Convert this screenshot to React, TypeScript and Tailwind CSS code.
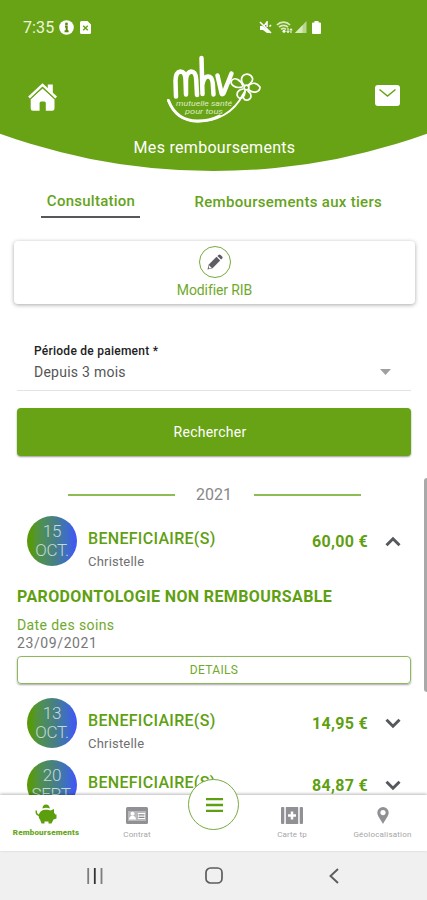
import React from 'react';
import { useState } from 'react';

type Refund = {
  id: number;
  day: string;
  month: string;
  amount: string;
  name: string;
  label?: string;
  careDate?: string;
};

const refunds: Refund[] = [
  {
    id: 1,
    day: '15',
    month: 'OCT.',
    amount: '60,00 €',
    name: 'Christelle',
    label: 'PARODONTOLOGIE NON REMBOURSABLE',
    careDate: '23/09/2021',
  },
  { id: 2, day: '13', month: 'OCT.', amount: '14,95 €', name: 'Christelle' },
  { id: 3, day: '20', month: 'SEPT.', amount: '84,87 €', name: 'Christelle' },
];

const StatusBar = () => {
  return (
    <div className="flex h-[18px] items-center pr-[106px] pl-[23px]">
      <span className="w-[36px] pt-px text-[16px] leading-[18px] tracking-[0.1px] text-[#eef6df]">
        7:35
      </span>
      <svg width="15" height="15" viewBox="0 0 15 15">
        <circle cx="7.5" cy="7.5" r="7.3" fill="#fff" />
        <circle cx="7.5" cy="3.9" r="1.4" fill="#57880f" />
        <path d="M6 6.4h1.7v4.8M5.6 11.2h4" stroke="#57880f" strokeWidth="2" fill="none" />
      </svg>
      <svg width="11" height="13" viewBox="0 0 11 13" className="ml-[6px]">
        <path d="M1.5 0h6L11 3.5v8a1.5 1.5 0 0 1-1.5 1.5h-8A1.5 1.5 0 0 1 0 11.5v-10A1.5 1.5 0 0 1 1.5 0z" fill="#fff" />
        <path d="M3.2 4.7l4.6 4.6M7.8 4.7l-4.6 4.6" stroke="#68a315" strokeWidth="1.5" />
      </svg>
      <div className="ml-auto flex items-center">
        <svg width="13" height="13" viewBox="0 0 13 13">
          <path d="M1 5h2.5L12 11.5V12L8 12 4 9H1z" fill="#fff" />
          <path d="M1 1l11 11M5.5 4.5l2.500-3.500v5M10.500 5.500L12 4" stroke="#fff" strokeWidth="1.6" />
        </svg>
        <svg width="17" height="13" viewBox="0 0 17 13" className="ml-[4px]">
          <path d="M1 4a9 9 0 0 1 13 0M3 6.2a6.5 6.5 0 0 1 9 0M5 8.4a4 4 0 0 1 5 0" stroke="#d9eabb" strokeWidth="1.8" fill="none" />
          <circle cx="8" cy="10.2" r="1.5" fill="#fff" />
          <path d="M12 7v4.5M10.6 10l1.4 1.7 1.3-1.7M15 12V8M13.7 9.2L15 7.7l1.3 1.5" stroke="#fff" strokeWidth="1" fill="none" />
        </svg>
        <svg width="12" height="12" viewBox="0 0 12 12" className="ml-[2px]">
          <path d="M0 12L11.5 0v12z" fill="#b9d690" />
          <path d="M0 12L7.5 4.2V12z" fill="#d9eabb" />
        </svg>
        <svg width="9" height="13" viewBox="0 0 9 13" className="ml-[5px]">
          <path d="M2.5 0h4v1.5H8A1 1 0 0 1 9 2.5V12a1 1 0 0 1-1 1H1a1 1 0 0 1-1-1V2.5a1 1 0 0 1 1-1h1.5z" fill="#fff" />
        </svg>
      </div>
    </div>
  );
};

const Logo = () => {
  return (
    <svg width="98" height="70" viewBox="0 0 98 70" fill="none" stroke="#fff" strokeLinecap="round" strokeLinejoin="round">
      {/* mhv, hand drawn */}
      <path d="M10 41.5L9.5 26c0-5 1.5-9 5-9.5 4 0 4.8 4 5 8l.5 15V26c0-5 2-9 5.2-9.5 4 0 4.8 4 5 8l.8 15.5" strokeWidth="4.5" />
      <path d="M35.5 3L36.5 39M36.5 29c1-5 3-7.5 5.5-7.5 4 0 4.5 4 4.8 7l.7 11" strokeWidth="4.5" />
      <path d="M51.5 20.5l4 17.5c.3 1.5 1.5 1.5 2.2 0L65.5 18.5" strokeWidth="4.5" />
      <path d="M2 45c5 14 16 21.5 30 21.5 19 0 36-9 45-27" strokeWidth="1.8" />
      <path d="M2.5 45.5c5 13 15 20.5 29 20.5 9 0 16-2 22-5" strokeWidth="3" />
      <g strokeWidth="1.7">
        <circle cx="80.5" cy="32.5" r="2.4" />
        <path d="M78 30c-4-4-3-9 1-10.5 5-1.5 9 3 7 7l-4 4" />
        <path d="M83 30c4-3 8-2 11 2 0 5-6 7-11 3" />
        <path d="M82 36c4 3 4 7 0 9-4 1-7-3-3-9" />
        <path d="M77 34c-6 1-7 5-5 8 3 3 7 0 7-6" />
        <path d="M77 31c-2-6-8-9-11-6-3 4 3 9 10 7" />
      </g>
      <text x="10" y="50.5" fill="#dcebc4" stroke="none" fontSize="8" fontStyle="italic" textLength="56" lengthAdjust="spacingAndGlyphs">
        mutuelle santé
      </text>
      <text x="19" y="58.5" fill="#dcebc4" stroke="none" fontSize="8" fontStyle="italic" textLength="38" lengthAdjust="spacingAndGlyphs">
        pour tous
      </text>
    </svg>
  );
};

const Header = () => {
  return (
    <header className="h-[171px] bg-[#68a315] pt-[18px] text-white [clip-path:circle(631px_at_50%_-460px)]">
      <StatusBar />
      <div className="flex h-[87px] items-start justify-between pr-[27px] pl-[28px]">
        <svg width="30" height="28" viewBox="0 0 30 28" fill="#fff" className="mt-[47px]">
          <path d="M14.5 5.5L26.5 16V25.5a2.3 2.3 0 0 1-2.3 2.3h-6.4V20a1.5 1.5 0 0 0-1.5-1.5h-3.2a1.5 1.5 0 0 0-1.5 1.5v7.8H5a2.3 2.3 0 0 1-2.3-2.3V16z" />
          <path d="M1 14.5L14.5 1.9l13.7 12.6" stroke="#fff" strokeWidth="2.4" fill="none" />
          <path d="M19.8 1.5h5V10l-5-4z" />
          <path d="M2.3 16.2L14.5 4.8l12.2 11.4" stroke="#68a315" strokeWidth="0.9" fill="none" />
        </svg>
        <div className="mt-[19px] ml-px">
          <Logo />
        </div>
        <svg width="25" height="21" viewBox="0 0 25 21" className="mt-[49px] ml-[4px]">
          <rect width="25" height="21" rx="3" fill="#fff" />
          <path d="M4.5 4.5l8 6.5 8-6.5" stroke="#68a315" strokeWidth="1.5" fill="none" />
        </svg>
      </div>
      <h1 className="mt-[15px] pl-[2px] text-center text-[16px] leading-5 tracking-[0.3px]">
        Mes remboursements
      </h1>
    </header>
  );
};

const Chevron = ({ up }: { up: boolean }) => (
  <svg width="16" height="11" viewBox="0 0 16 11" fill="none" stroke="#55585c" strokeWidth="3">
    <path d={up ? 'M1.5 9.2L8 2.8l6.5 6.4' : 'M1.5 1.8L8 8.2l6.5-6.4'} />
  </svg>
);

type RowProps = {
  refund: Refund;
  open: boolean;
  onToggle: () => void;
};

const RefundRow = ({ refund, open, onToggle }: RowProps) => {
  return (
    <div>
      <div onClick={onToggle} className="flex h-[50px] cursor-pointer pr-[26px] pl-[27px]">
        <div className="flex h-[50px] w-[50px] shrink-0 flex-col items-center overflow-hidden rounded-full bg-linear-to-r from-[#57980d] from-10% via-[#477f82] via-55% to-[#4358ee] to-95% pt-[6px] text-[17px] leading-[19px] font-light tracking-[-0.3px] text-[#c5d9d3]">
          <span>{refund.day}</span>
          <span>{refund.month}</span>
        </div>
        <div className="ml-[11px] pt-[13px]">
          <p className="text-[16px] leading-5 font-medium tracking-[0.3px] text-[#5f9f12]">
            BENEFICIAIRE(S)
          </p>
          <p className="mt-[5px] text-[13px] leading-4 tracking-[0.2px] text-[#707070]">
            {refund.name}
          </p>
        </div>
        <div className="ml-auto flex h-[50px] items-center">
          <span className="pt-px text-[16px] font-bold tracking-[0.3px] text-[#5f9f12]">{refund.amount}</span>
          <span className="ml-[17px]">
            <Chevron up={open} />
          </span>
        </div>
      </div>
      {open && refund.label && (
        <div className="mt-[21px] pr-[16px] pb-[2px] pl-[17px]">
          <p className="text-[16px] leading-5 font-bold tracking-[0.38px] whitespace-nowrap text-[#5f9f12]">
            {refund.label}
          </p>
          <p className="mt-[9px] text-[14px] leading-[18px] tracking-[0.4px] text-[#6fa92c]">Date des soins</p>
          <p className="text-[14px] leading-[18px] tracking-[0.6px] text-[#777]">{refund.careDate}</p>
          <button
            type="button"
            className="mt-[4px] block h-[28px] w-full rounded-[4px] border border-[#8db85c] text-[12px] tracking-[0.3px] text-[#6fa92c] shadow-[0_1px_2px_rgba(0,0,0,0.35)]"
          >
            DETAILS
          </button>
        </div>
      )}
    </div>
  );
};

const BottomNav = () => {
  return (
    <nav className="relative flex h-[56px] bg-white text-[8px] leading-[9px] text-[#a5a5a8] shadow-[0_-1px_3px_rgba(0,0,0,0.28)]">
      <div className="flex w-[92px] flex-col items-center pt-[9px]">
        <svg width="22" height="20" viewBox="0 0 22 20" fill="#5c9e0d">
          <path d="M7.5 4.5C7.5 1 10 .5 11 .5s3.7.5 3.7 4c-2-1-5-1-7.2 0z" />
          <path d="M6 7.2C8 5.3 13.5 5.3 15.5 6.5L19 5v3.5l1.3 2h1.2v4L18.5 15.5 16.5 19.5h-3V17.5H9.5v2H6.5L5 15.5C3.3 13.5 3 10 6 7.2z" />
          <path d="M4.5 11.5C2 11 1 9 1.2 6.5" stroke="#5c9e0d" strokeWidth="1.4" fill="none" />
        </svg>
        <span className="mt-[4px] font-black tracking-[0.16px] text-[#6aa823]">Remboursements</span>
      </div>
      <div className="flex w-[90px] flex-col items-center pt-[12px]">
        <svg width="22" height="17" viewBox="0 0 22 17">
          <rect width="22" height="17" rx="1.5" fill="#919195" />
          <rect x="2" y="4" width="18" height="10" fill="#b9b9bd" />
          <circle cx="6.5" cy="6.8" r="2" fill="#fff" />
          <path d="M3 12.5c0-5 7-5 7 0z" fill="#fff" />
          <path d="M12 6h7v6h-7z" fill="#fff" />
          <path d="M12.5 7.8h6M12.5 10.3h6" stroke="#88888c" strokeWidth="1.2" />
        </svg>
        <span className="mt-[6px] tracking-[0.15px]">Contrat</span>
      </div>
      <div className="w-[64px]" />
      <div className="flex w-[92px] flex-col items-center pt-[12px]">
        <svg width="22" height="17" viewBox="0 0 22 17" fill="#919195">
          <rect width="3.3" height="17" rx="1" />
          <rect x="4.8" width="12.4" height="17" />
          <rect x="18.7" width="3.3" height="17" rx="1" />
          <path d="M11 4.5v8M7 8.5h8" stroke="#fff" strokeWidth="2.5" />
        </svg>
        <span className="mt-[6px] tracking-[0.15px]">Carte tp</span>
      </div>
      <div className="flex w-[89px] flex-col items-center pt-[12px]">
        <svg width="12" height="17" viewBox="0 0 12 17">
          <path d="M6 0a5.7 5.7 0 0 1 5.7 5.8C11.7 9 8 13 6 17 4 13 .3 9 .3 5.8A5.7 5.7 0 0 1 6 0z" fill="#919195" />
          <circle cx="6" cy="5.6" r="2.6" fill="#fff" />
        </svg>
        <span className="mt-[6px] tracking-[0.2px]">Géolocalisation</span>
      </div>
      <button
        type="button"
        className="absolute top-[-16px] left-[188px] flex h-[51px] w-[51px] items-center justify-center rounded-full border border-[#78aa3d] bg-white"
      >
        <svg width="17" height="14" viewBox="0 0 17 14" stroke="#5f9f12" strokeWidth="2.3" className="ml-px">
          <path d="M0 1.2h17M0 7h17M0 12.8h17" />
        </svg>
      </button>
    </nav>
  );
};

const SystemBar = () => (
  <div className="flex h-[49px] items-center bg-[#f0f0f0] pl-[87px]">
    <svg width="16" height="16" viewBox="0 0 16 16" strokeWidth="1.8">
      <path d="M1.2 0v16M14.5 0v16" stroke="#7d7d7d" />
      <path d="M7.8 0v16" stroke="#333" />
    </svg>
    <svg width="18" height="17" viewBox="0 0 18 17" fill="none" stroke="#5c5c5c" strokeWidth="1.7" className="ml-[102px]">
      <rect x="1" y="1" width="16" height="15" rx="4.5" />
    </svg>
    <svg width="10" height="16" viewBox="0 0 10 16" fill="none" stroke="#5c5c5c" strokeWidth="1.9" className="ml-[106px]">
      <path d="M9 1L1.5 8 9 15" />
    </svg>
  </div>
);

const App = () => {
  const [openId, setOpenId] = useState<number | null>(1);

  return (
    <div className="flex h-[900px] w-[427px] flex-col overflow-hidden bg-white font-['Roboto',sans-serif]">
      <main className="relative min-h-0 flex-1 overflow-hidden">
        <Header />
        <div className="flex h-[47px] items-start text-[15px] font-medium whitespace-nowrap text-[#65a31c]">
          <div className="ml-[41px] h-[47px] w-[99px] border-b-2 border-[#56575d] pt-[20px] pl-px text-center leading-5 tracking-[0.25px]">
            Consultation
          </div>
          <div className="ml-[54.5px] pt-[21px] leading-5 tracking-[0.3px]">Remboursements aux tiers</div>
        </div>

        <div className="mt-[23px] mr-[12px] ml-[14px] flex h-[63px] flex-col items-center rounded-[4px] pt-[5px] shadow-[0_1px_4px_rgba(0,0,0,0.35)]">
          <div className="flex h-[32px] w-[32px] items-center justify-center rounded-full border-[1.5px] border-[#78aa3d]">
            <svg width="16" height="16" viewBox="0 0 16 16" fill="#5d5d65">
              <path d="M1.8 10.5l7.7-7.7 3.7 3.7-7.7 7.7L.5 15.5z" />
              <path d="M10.4 1.9l1-1c.7-.7 1.5-.7 2.2 0l1.5 1.5c.7.7.7 1.5 0 2.2l-1 1z" />
              <path d="M2 11.2l2.8 2.8-3 .5z" fill="#fff" />
            </svg>
          </div>
          <span className="mt-[3px] text-[14px] leading-[18px] tracking-[-0.1px] text-[#6fa92c]">Modifier RIB</span>
        </div>

        <div className="mt-[39px] mr-[16px] ml-[17px] h-[48px] border-b border-[#e4e4e4] pr-[20px] pl-[17px]">
          <p className="text-[12px] leading-4 font-medium tracking-[0.25px] text-[#222]">Période de paiement *</p>
          <div className="mt-[4px] flex items-center justify-between">
            <span className="text-[14px] leading-[18px] tracking-[0.25px] text-[#555]">Depuis 3 mois</span>
            <svg width="11" height="6" viewBox="0 0 11 6">
              <path d="M0 0h11L5.5 6z" fill="#a0a0a0" />
            </svg>
          </div>
        </div>

        <button
          type="button"
          className="mt-[17px] mr-[16px] ml-[17px] block h-[48px] w-[394px] rounded-[4px] bg-[#68a315] pr-[8px] text-[14px] tracking-[0.25px] text-white shadow-[0_1px_2px_rgba(0,0,0,0.4)]"
        >
          Rechercher
        </button>

        <div className="mt-[29px] ml-px flex h-5 items-center justify-center gap-[20px] text-[16px] text-[#888]">
          <div className="h-[1.5px] w-[107px] bg-[#8fbb55]" />
          <span className="w-[39px] text-center">2021</span>
          <div className="h-[1.5px] w-[107px] bg-[#8fbb55]" />
        </div>

        <div className="mt-[11px] flex flex-col gap-[12px]">
          {refunds.map((refund) => (
            <RefundRow
              key={refund.id}
              refund={refund}
              open={openId === refund.id}
              onToggle={() => setOpenId(openId === refund.id ? null : refund.id)}
            />
          ))}
        </div>
        {/* scroll thumb */}
        <div className="absolute top-[478px] right-0 h-[214px] w-[3px] rounded-l-full bg-[#a9a9a9]" />
      </main>
      <BottomNav />
      <SystemBar />
    </div>
  );
};

export default App;
